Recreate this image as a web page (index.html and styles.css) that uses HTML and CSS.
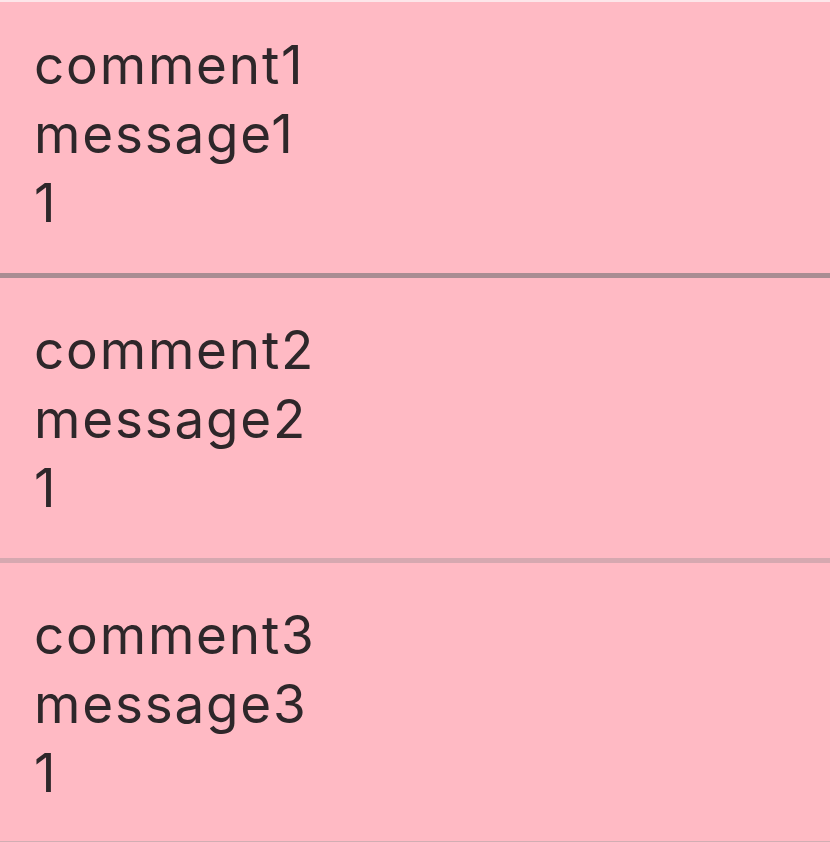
FILE: index.html
```html
<!DOCTYPE html>
<html>
<head>
<meta charset="utf-8">
<link rel="stylesheet" href="styles.css">
</head>
<body>
<div class="list">
  <div class="row">
    <div class="line">comment1</div>
    <div class="line">message1</div>
    <div class="line">1</div>
  </div>
  <div class="row">
    <div class="line">comment2</div>
    <div class="line">message2</div>
    <div class="line">1</div>
  </div>
  <div class="row">
    <div class="line">comment3</div>
    <div class="line">message3</div>
    <div class="line">1</div>
  </div>
</div>
</body>
</html>
```

FILE: styles.css
```css
html, body {
  margin: 0;
  padding: 0;
  background: #ffbac4;
  overflow: hidden;
}
.list {
  border-top: 2px solid #fde6ea;
  display: flex;
  flex-direction: column;
}
.row {
  background: #ffbac4;
  padding: 38px 0 35px 34px;
  border-bottom: 5px solid #a98d93;
  font-family: Inter, "Liberation Sans", Arial, sans-serif;
  font-size: 53px;
  letter-spacing: 1.8px;
  line-height: 69px;
  color: #2e272a;
}
.row:first-child {
  padding-top: 29px;
}
.row:nth-child(2) {
  border-bottom: 5px solid #d6a8b0;
}
.row:nth-child(3) {
  padding-bottom: 33px;
  border-bottom: 5px solid #d2adb3;
}
```
